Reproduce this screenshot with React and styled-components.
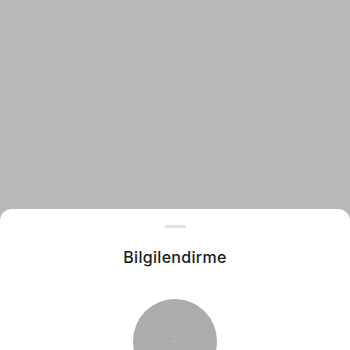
import React from "react";
import styled, { createGlobalStyle } from "styled-components";

const Global = createGlobalStyle`
  html, body { margin: 0; padding: 0; }
  body { font-family: "Inter", "Noto Sans", sans-serif; }
`;

const Backdrop = styled.div`
  height: 100vh;
  display: flex;
  flex-direction: column;
  justify-content: flex-end;
  background: #b9b9bb;
  overflow: hidden;
`;

const Sheet = styled.div`
  height: 141px;
  background: #ffffff;
  border-radius: 12px 12px 0 0;
  padding-top: 16px;
  box-sizing: border-box;
  display: flex;
  flex-direction: column;
  align-items: center;
  overflow: hidden;
`;

const Handle = styled.div`
  width: 21px;
  height: 3px;
  flex-shrink: 0;
  border-radius: 2px;
  background: #e0e0e2;
`;

const Title = styled.h2`
  margin: 19px 0 0;
  font-size: 16px;
  line-height: 20px;
  font-weight: 500;
  letter-spacing: 0.3px;
  color: #1c1c1e;
`;

const Avatar = styled.div`
  margin-top: 32px;
  width: 84px;
  height: 84px;
  flex-shrink: 0;
  border-radius: 50%;
  background: #acacad;
  display: flex;
  align-items: center;
  justify-content: center;
`;

const Dash = styled.span`
  width: 5px;
  height: 1px;
  background: #bdbdbe;
`;

export default function App() {
  return (
    <>
      <Global />
      <Backdrop>
        <Sheet>
          <Handle />
          <Title>Bilgilendirme</Title>
          <Avatar>
            <Dash />
          </Avatar>
        </Sheet>
      </Backdrop>
    </>
  );
}
